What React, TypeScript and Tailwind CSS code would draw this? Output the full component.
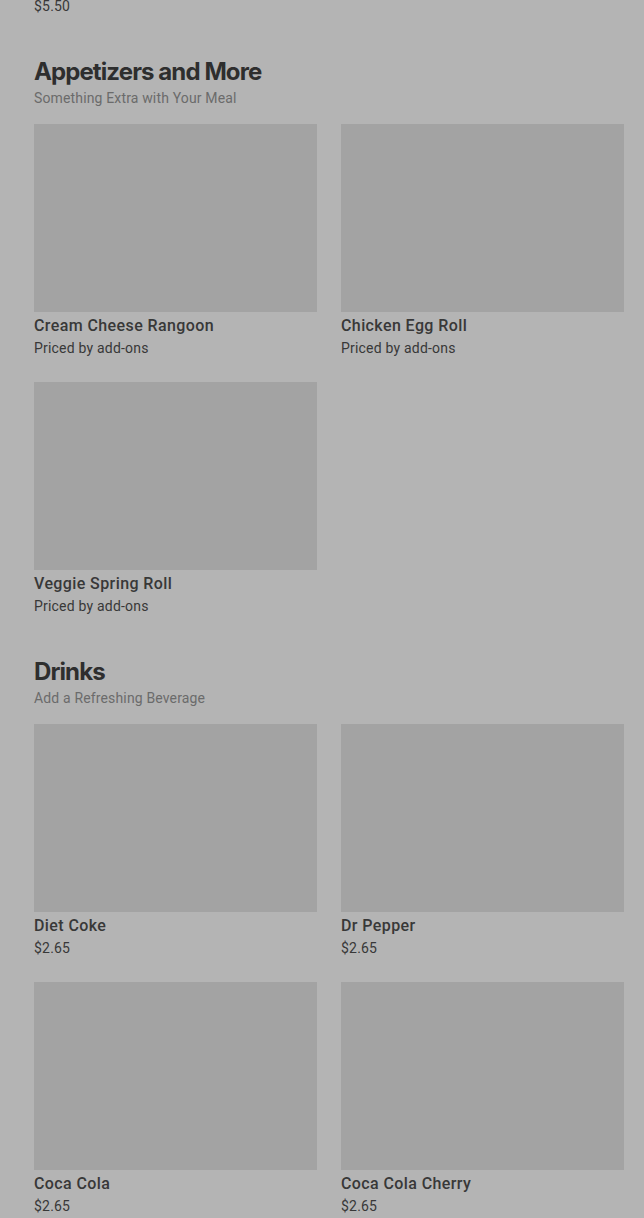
const sections = [
  {
    title: 'Appetizers and More',
    subtitle: 'Something Extra with Your Meal',
    items: [
      { name: 'Cream Cheese Rangoon', price: 'Priced by add-ons' },
      { name: 'Chicken Egg Roll', price: 'Priced by add-ons' },
      { name: 'Veggie Spring Roll', price: 'Priced by add-ons' },
    ],
  },
  {
    title: 'Drinks',
    subtitle: 'Add a Refreshing Beverage',
    items: [
      { name: 'Diet Coke', price: '$2.65' },
      { name: 'Dr Pepper', price: '$2.65' },
      { name: 'Coca Cola', price: '$2.65' },
      { name: 'Coca Cola Cherry', price: '$2.65' },
    ],
  },
];

function MenuCard({ name, price }: { name: string; price: string }) {
  return (
    <div className="flex flex-col">
      <div className="h-[188px] w-full bg-[#a3a3a3]" />
      <p className="mt-[2px] text-[16px] leading-[24px] font-medium tracking-[0.4px] text-[#383838]">{name}</p>
      <p className="text-[14px] leading-[20px] tracking-[0.2px] text-[#383838]">{price}</p>
    </div>
  );
}

export default function App() {
  return (
    <div
      className="min-h-[1218px] overflow-hidden bg-[#b4b4b4] pl-[34px] pr-[20px]"
      style={{ fontFamily: 'Roboto, "Noto Sans", sans-serif' }}
    >
      <p className="-mt-[4px] text-[14px] leading-[20px] tracking-[0.2px] text-[#383838]">$5.50</p>
      {sections.map((section) => (
        <section key={section.title} className="mt-[40px]">
          <h2
            className="text-[24px] leading-[32px] font-bold tracking-[-0.9px] text-[#2e2e2e]"
            style={{ fontFamily: 'Inter, "Noto Sans", sans-serif' }}
          >
            {section.title}
          </h2>
          <p className="text-[14px] leading-[20px] tracking-[0.15px] text-[#6b6b6b]">{section.subtitle}</p>
          <div className="mt-[16px] grid grid-cols-2 gap-x-[24px] gap-y-[24px]">
            {section.items.map((item) => (
              <MenuCard key={item.name} name={item.name} price={item.price} />
            ))}
          </div>
        </section>
      ))}
    </div>
  );
}
